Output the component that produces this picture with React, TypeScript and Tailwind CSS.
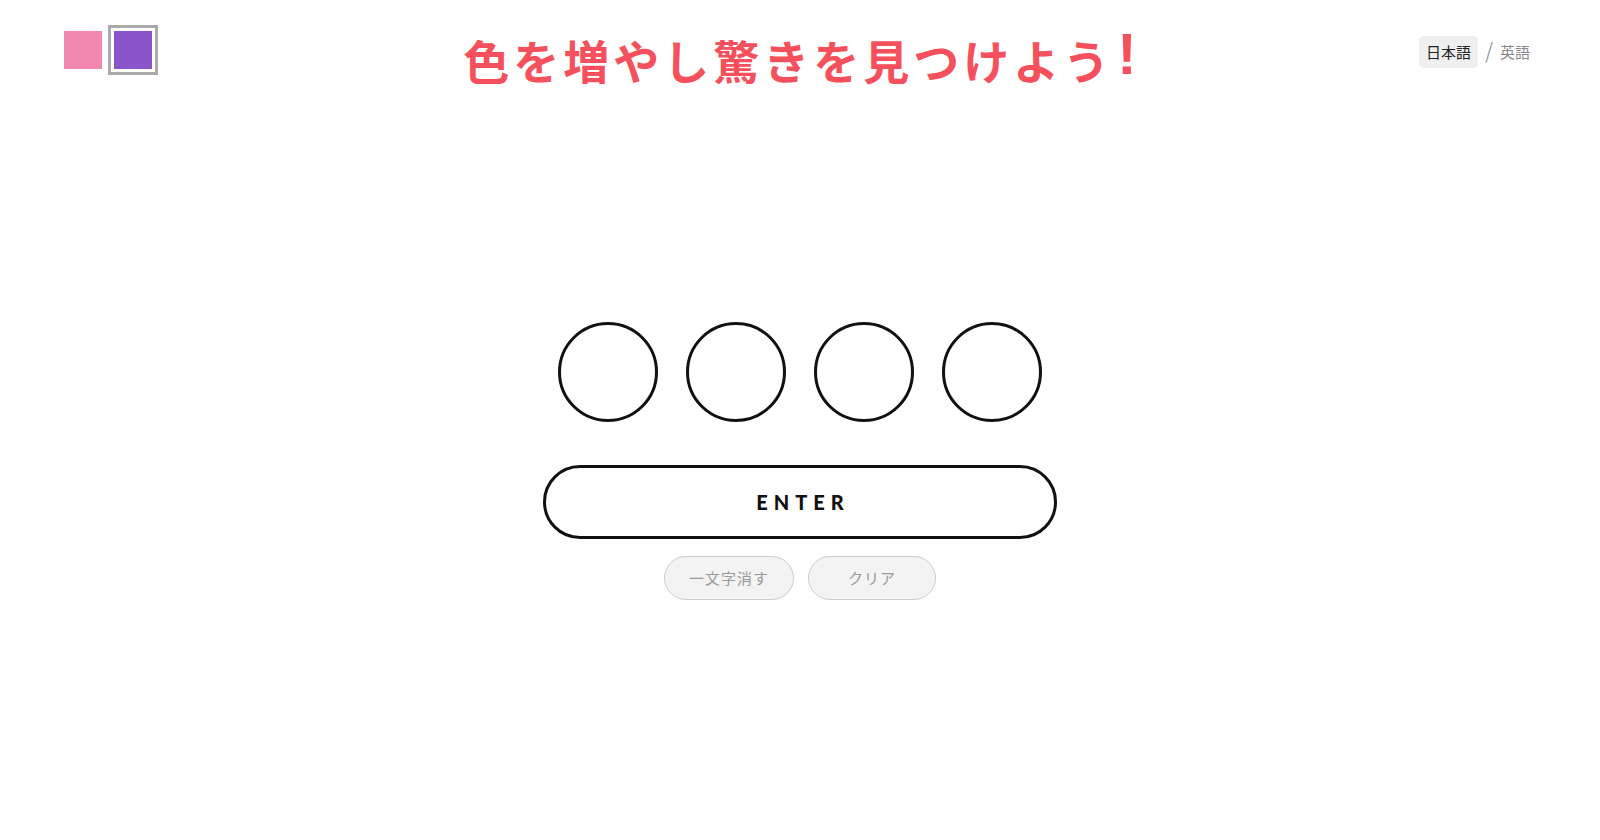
import React from "react";

export default function App() {
  return (
    <div className="w-full h-[840px] bg-white font-['Noto_Sans_CJK_JP',sans-serif] text-[#111]">
      <header className="grid grid-cols-[1fr_auto_1fr] items-start h-[100px] pt-[25px] pl-[58px] pr-[70px]">
        <div className="flex">
          <button className="w-[50px] h-[50px] p-[3px] border-[3px] border-transparent">
            <div className="w-full h-full bg-[#f088b0]" />
          </button>
          <button className="w-[50px] h-[50px] p-[3px] border-[3px] border-[#aaaaaa]">
            <div className="w-full h-full bg-[#8a55c8]" />
          </button>
        </div>
        <h1 className="mt-[0px] pl-[12px] flex items-end text-[46px] leading-none font-bold tracking-[4px] text-[#f5505b] font-['Noto_Sans_CJK_JP',sans-serif]">
          <span>色を増やし驚きを見つけよう</span>
          <span className="ml-[4px] mb-[-1px] font-['Liberation_Sans',sans-serif] text-[58px] leading-none tracking-normal">!</span>
        </h1>
        <div className="flex justify-end items-center mt-[11px]">
          <button className="h-[32px] px-[7px] rounded-[5px] bg-[#efefef] text-[15px] text-[#222]">
            日本語
          </button>
          <span className="mx-[7px] text-[24px] leading-none text-[#999] font-['DejaVu_Sans',sans-serif] font-light">/</span>
          <button className="text-[15px] text-[#888]">英語</button>
        </div>
      </header>
      <main className="flex flex-col items-center pt-[222px]">
        <div className="flex gap-[28px]">
          <div className="w-[100px] h-[100px] rounded-full border-[3px] border-[#111]" />
          <div className="w-[100px] h-[100px] rounded-full border-[3px] border-[#111]" />
          <div className="w-[100px] h-[100px] rounded-full border-[3px] border-[#111]" />
          <div className="w-[100px] h-[100px] rounded-full border-[3px] border-[#111]" />
        </div>
        <button className="mt-[43px] w-[514px] h-[74px] rounded-full border-[3px] border-[#111] bg-white flex items-center justify-center">
          <span className="pl-[6px] text-[20px] font-black tracking-[6px] font-['Lato',sans-serif] text-[#111]">ENTER</span>
        </button>
        <div className="flex gap-[14px] mt-[17px]">
          <button className="w-[130px] h-[44px] rounded-full border border-[#cccccc] bg-[#f3f3f3] text-[15px] tracking-[1px] text-[#999]">
            一文字消す
          </button>
          <button className="w-[128px] h-[44px] rounded-full border border-[#cccccc] bg-[#f3f3f3] text-[15px] tracking-[1px] text-[#999]">
            クリア
          </button>
        </div>
      </main>
    </div>
  );
}
